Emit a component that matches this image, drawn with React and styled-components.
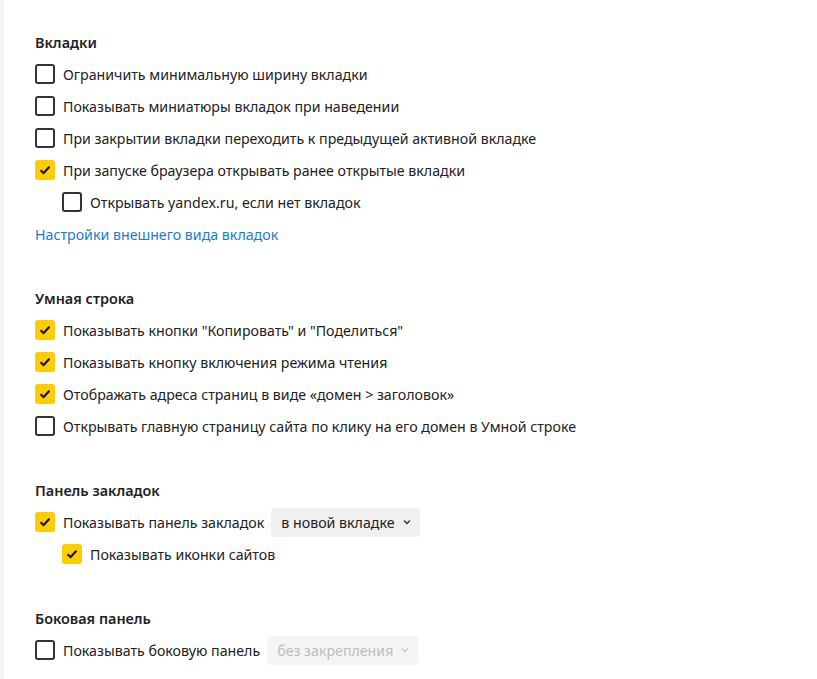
import React from "react";
import styled, { createGlobalStyle } from "styled-components";

const Global = createGlobalStyle`
  html, body { margin: 0; padding: 0; background: #fff; }
  body { font-family: "Noto Sans", "Open Sans", sans-serif; color: #222; }
`;

const Page = styled.div`
  display: flex;
  min-height: 679px;
`;

const Strip = styled.div`
  width: 4px;
  background: #f3f3f3;
  flex: none;
`;

const Content = styled.main`
  flex: 1;
  padding: 33px 0 0 31px;
  display: flex;
  flex-direction: column;
  gap: 39px;
`;

const Section = styled.section`
  display: flex;
  flex-direction: column;
`;

const Heading = styled.h2`
  margin: 0 0 5px;
  font-size: 14.4px;
  font-weight: 600;
  line-height: 20px;
  color: #222;
`;

const Row = styled.div`
  display: flex;
  align-items: center;
  height: 32px;
  padding-left: ${(p) => (p.$nested ? 27 : 0)}px;
  font-size: 14.2px;
`;

const Box = styled.span`
  box-sizing: border-box;
  width: 20px;
  height: 20px;
  border-radius: 3px;
  flex: none;
  margin-right: 8px;
  display: flex;
  align-items: center;
  justify-content: center;
  background: ${(p) => (p.$checked ? "#ffcc00" : "#fff")};
  border: ${(p) => (p.$checked ? "none" : "2px solid #333")};
`;

const Label = styled.span`
  color: #222;
  white-space: nowrap;
`;

const Link = styled.a`
  color: #1a7ad6;
  text-decoration: none;
  font-size: 14.2px;
  display: flex;
  align-items: center;
  height: 32px;
`;

const Select = styled.span`
  display: inline-flex;
  align-items: center;
  height: 29px;
  box-sizing: border-box;
  padding: 0 9px 0 10px;
  margin-left: 7px;
  border-radius: 4px;
  background: ${(p) => (p.$disabled ? "#f5f5f5" : "#f0f0f0")};
  color: ${(p) => (p.$disabled ? "#bdbdbd" : "#222")};
  gap: 8px;
`;

const Check = () => (
  <svg width="12" height="10" viewBox="0 0 12 10">
    <path d="M1.5 5.2 L4.6 8 L10.5 1.8" fill="none" stroke="#111" strokeWidth="2" />
  </svg>
);

const Chevron = ({ color }) => (
  <svg width="8" height="6" viewBox="0 0 8 6">
    <path d="M1 1.5 L4 4.5 L7 1.5" fill="none" stroke={color} strokeWidth="1.4" />
  </svg>
);

const Option = ({ checked, nested, children, select }) => (
  <Row $nested={nested}>
    <Box $checked={checked}>{checked && <Check />}</Box>
    <Label>{children}</Label>
    {select}
  </Row>
);

export default function App() {
  return (
    <>
      <Global />
      <Page>
        <Strip />
        <Content>
          <Section>
            <Heading>Вкладки</Heading>
            <Option>Ограничить минимальную ширину вкладки</Option>
            <Option>Показывать миниатюры вкладок при наведении</Option>
            <Option>При закрытии вкладки переходить к предыдущей активной вкладке</Option>
            <Option checked>При запуске браузера открывать ранее открытые вкладки</Option>
            <Option nested>Открывать yandex.ru, если нет вкладок</Option>
            <Link href="#">Настройки внешнего вида вкладок</Link>
          </Section>
          <Section>
            <Heading>Умная строка</Heading>
            <Option checked>Показывать кнопки "Копировать" и "Поделиться"</Option>
            <Option checked>Показывать кнопку включения режима чтения</Option>
            <Option checked>Отображать адреса страниц в виде «домен &gt; заголовок»</Option>
            <Option>Открывать главную страницу сайта по клику на его домен в Умной строке</Option>
          </Section>
          <Section>
            <Heading>Панель закладок</Heading>
            <Option
              checked
              select={
                <Select>
                  в новой вкладке <Chevron color="#333" />
                </Select>
              }
            >
              Показывать панель закладок
            </Option>
            <Option checked nested>Показывать иконки сайтов</Option>
          </Section>
          <Section>
            <Heading>Боковая панель</Heading>
            <Option
              select={
                <Select $disabled>
                  без закрепления <Chevron color="#c8c8c8" />
                </Select>
              }
            >
              Показывать боковую панель
            </Option>
          </Section>
        </Content>
      </Page>
    </>
  );
}
